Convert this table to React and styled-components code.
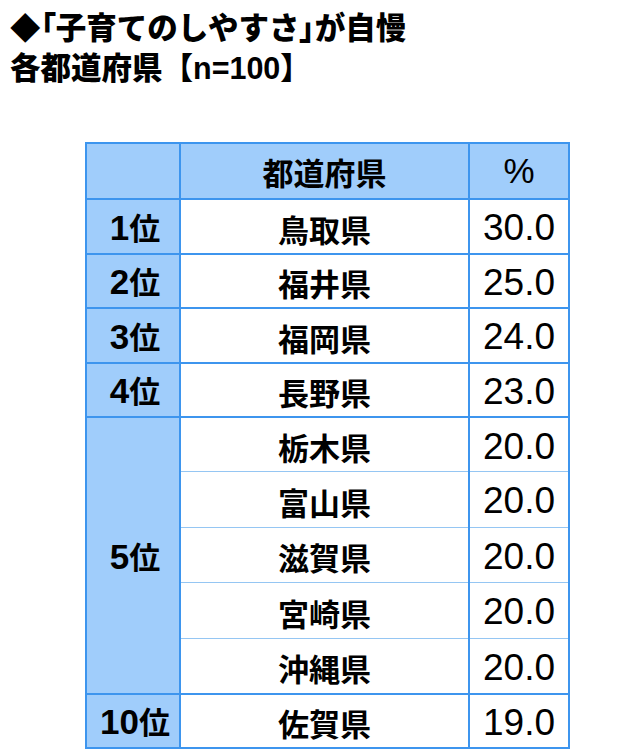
import React from "react";
import styled, { createGlobalStyle } from "styled-components";

const GlobalStyle = createGlobalStyle`
  html, body { margin: 0; padding: 0; background: #ffffff; }
  body { font-family: "Liberation Sans", "Noto Sans CJK JP", sans-serif; color: #000; }
`;

const Page = styled.div`
  width: 640px;
  height: 749px;
  padding: 8px 0 0 10px;
  box-sizing: border-box;
  overflow: hidden;
`;

const Title = styled.h1`
  margin: 0;
  font-family: "Liberation Sans", "Noto Sans CJK JP", sans-serif;
  font-weight: 900;
  font-size: 30.5px;
  line-height: 40px;
  letter-spacing: 0;
`;

const Bracket = styled.span`
  font-feature-settings: "palt";
`;

const Table = styled.table`
  margin: 54px 0 0 75px;
  border-collapse: collapse;
  table-layout: fixed;
  width: 483px;
  border: 2px solid #3d95ee;
`;

const HeadCell = styled.th`
  height: 54px;
  padding: 0;
  background: #a0cdfb;
  border: 2px solid #3d95ee;
  font-weight: ${(p) => (p.$regular ? 400 : 700)};
  font-size: ${(p) => (p.$regular ? "35px" : "31px")};
  text-align: center;
  vertical-align: middle;
`;

const RankCell = styled.td`
  padding: 0 0 0 4px;
  background: #a0cdfb;
  border: 2px solid #3d95ee;
  font-weight: 700;
  font-size: 31px;
  text-align: center;
  vertical-align: middle;
  white-space: nowrap;
`;

const Digits = styled.span`
  font-size: 35px;
`;

const NameCell = styled.td`
  height: ${(p) => (p.$inner ? "55.5px" : "54.5px")};
  padding: 4px 0 0 0;
  box-sizing: border-box;
  background: #ffffff;
  border-left: 2px solid #3d95ee;
  border-right: 2px solid #3d95ee;
  border-top: ${(p) => (p.$inner ? "1px solid #95c6f3" : "2px solid #3d95ee")};
  border-bottom: ${(p) => (p.$innerBottom ? "1px solid #95c6f3" : "2px solid #3d95ee")};
  font-weight: 700;
  font-size: 31px;
  text-align: center;
  vertical-align: middle;
`;

const ValueCell = styled.td`
  padding: 4px 13px 0 0;
  background: #ffffff;
  border-left: 2px solid #3d95ee;
  border-right: 2px solid #3d95ee;
  border-top: ${(p) => (p.$inner ? "1px solid #95c6f3" : "2px solid #3d95ee")};
  border-bottom: ${(p) => (p.$innerBottom ? "1px solid #95c6f3" : "2px solid #3d95ee")};
  font-weight: 400;
  font-size: 37px;
  text-align: right;
  vertical-align: middle;
`;

const groups = [
  { rank: "1", items: [["鳥取県", "30.0"]] },
  { rank: "2", items: [["福井県", "25.0"]] },
  { rank: "3", items: [["福岡県", "24.0"]] },
  { rank: "4", items: [["長野県", "23.0"]] },
  {
    rank: "5",
    items: [
      ["栃木県", "20.0"],
      ["富山県", "20.0"],
      ["滋賀県", "20.0"],
      ["宮崎県", "20.0"],
      ["沖縄県", "20.0"],
    ],
  },
  { rank: "10", items: [["佐賀県", "19.0"]] },
];

export default function App() {
  return (
    <>
      <GlobalStyle />
      <Page>
        <Title>
          ◆<Bracket>「</Bracket>子育てのしやすさ<Bracket>」</Bracket>が自慢
          <br />
          各都道府県【n=100】
        </Title>
        <Table>
          <colgroup>
            <col style={{ width: "94px" }} />
            <col style={{ width: "289px" }} />
            <col style={{ width: "100px" }} />
          </colgroup>
          <thead>
            <tr>
              <HeadCell />
              <HeadCell>都道府県</HeadCell>
              <HeadCell $regular>%</HeadCell>
            </tr>
          </thead>
          <tbody>
            {groups.map((g) =>
              g.items.map(([name, value], i) => {
                const inner = i > 0;
                const innerBottom = i < g.items.length - 1;
                return (
                  <tr key={name}>
                    {i === 0 && (
                      <RankCell rowSpan={g.items.length}>
                        <Digits>{g.rank}</Digits>位
                      </RankCell>
                    )}
                    <NameCell $inner={inner} $innerBottom={innerBottom}>
                      {name}
                    </NameCell>
                    <ValueCell $inner={inner} $innerBottom={innerBottom}>
                      {value}
                    </ValueCell>
                  </tr>
                );
              })
            )}
          </tbody>
        </Table>
      </Page>
    </>
  );
}
